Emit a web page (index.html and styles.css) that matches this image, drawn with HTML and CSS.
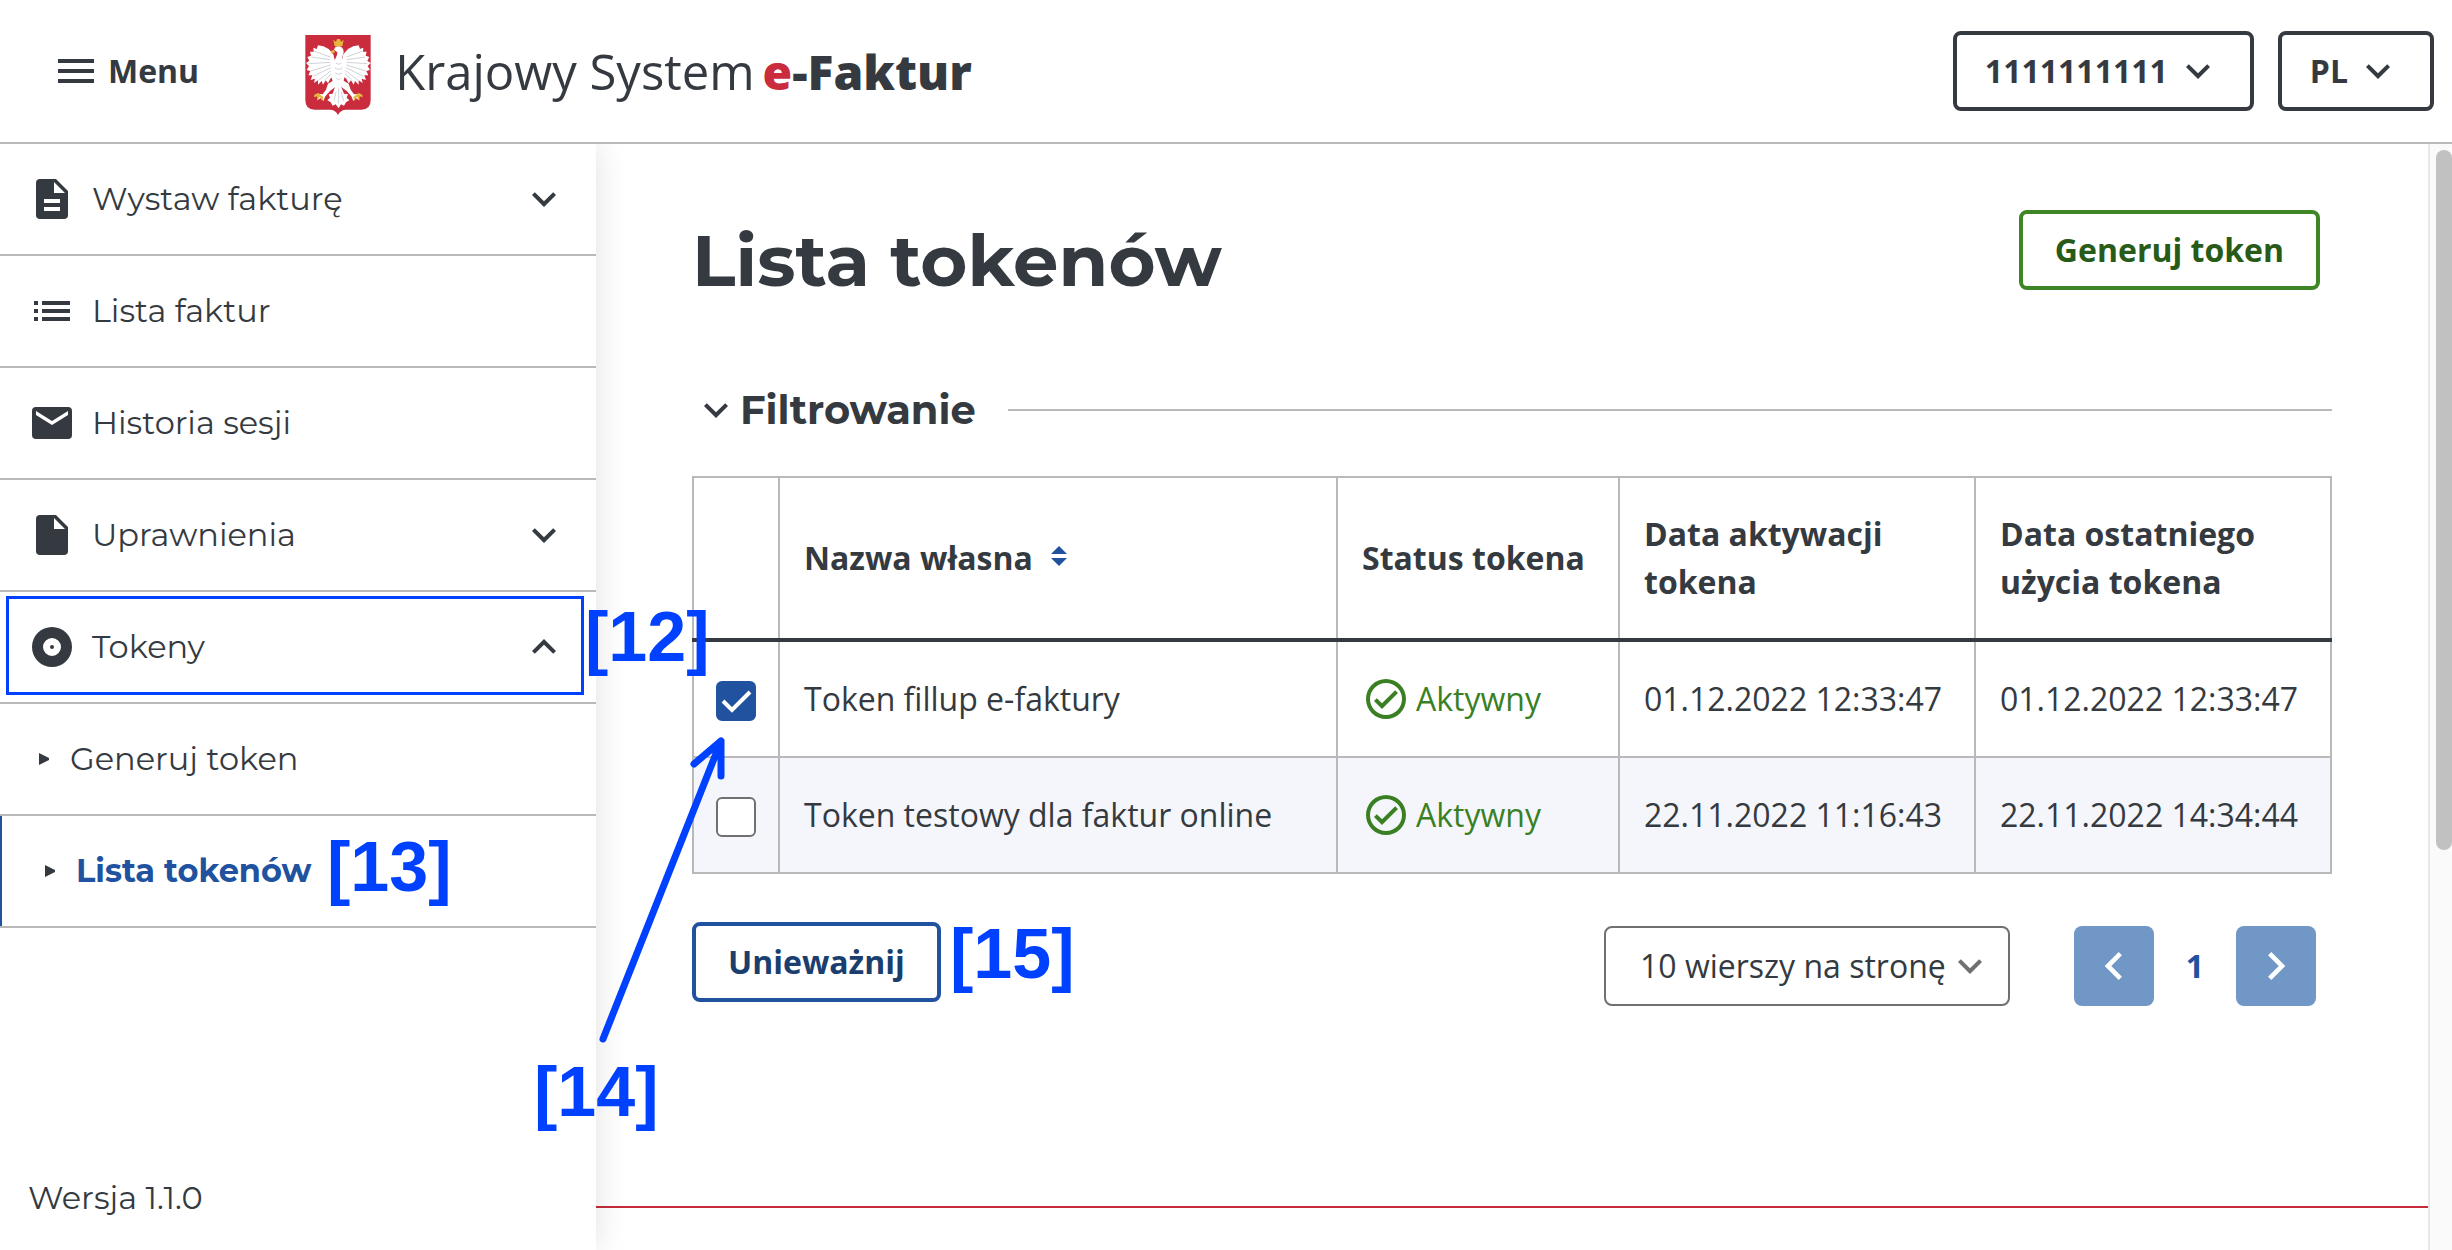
FILE: index.html
```html
<!DOCTYPE html>
<html lang="pl">

<head>
  <meta charset="utf-8">
  <title>Krajowy System e-Faktur - Lista tokenów</title>
  <link rel="stylesheet" href="styles.css">
</head>

<body>
  <!-- Icons -->
  <svg class="sprite" aria-hidden="true">
    <symbol id="i-down" viewBox="0 0 24 24"><path d="M7.41 8.59 12 13.17l4.59-4.58L18 10l-6 6-6-6z"/></symbol>
    <symbol id="i-up" viewBox="0 0 24 24"><path d="M7.41 15.41 12 10.83l4.59 4.58L18 14l-6-6-6 6z"/></symbol>
    <symbol id="i-left" viewBox="0 0 24 24"><path d="M15.41 7.41 14 6l-6 6 6 6 1.41-1.41L10.83 12z"/></symbol>
    <symbol id="i-right" viewBox="0 0 24 24"><path d="M10 6 8.59 7.41 13.17 12l-4.58 4.59L10 18l6-6z"/></symbol>
    <symbol id="i-check" viewBox="0 0 24 24"><path d="M16.59 7.58 10 14.17l-2.59-2.58L6 13l4 4 8-8zM12 2a10 10 0 1 0 0 20 10 10 0 0 0 0-20zm0 18a8 8 0 1 1 0-16 8 8 0 0 1 0 16z"/></symbol>
    <symbol id="i-play" viewBox="0 0 12 12"><path d="M1 0l10 5v2L1 12z"/></symbol>
  </svg>

  <header class="top-bar">
    <button class="menu-button">
      <svg class="icon" viewBox="0 0 24 24"><path d="M3 18h18v-2H3zm0-5h18v-2H3zm0-7v2h18V6z"/></svg>
      Menu
    </button>
    <a class="brand" href="#">
      <svg class="emblem" viewBox="0 0 196 240" role="img" aria-label="Godło Polski">
        <path fill="#cb2c3d" d="M0 0h196v196q0 28-28 28h-48q-16 2-22 16-6-14-22-16H28Q0 224 0 196z"/>
        <g id="wing" fill="#fff">
          <path d="M90 84 84 58 70 42 54 34 38 31 34 42 24 38 25 50 14 50 17 62 6 66 12 77 2 84 11 93 4 105 15 108 9 121 21 121 16 135 29 131 26 144 38 136 38 149 49 138 53 149 61 136 68 145 76 130 90 122z"/>
          <path d="M92 132 68 146 62 164 52 178 38 176 28 182 40 184 36 196 48 188 54 198 60 184 74 168 90 156z"/>
          <g fill="none" stroke="#cfd2d8" stroke-width="3">
            <path d="M74 66 26 48M74 74 18 66M74 82 12 86M75 90 16 108M76 98 24 124M78 106 40 136M82 112 60 134"/>
          </g>
          <path fill="#e5b73b" d="M38 174l-11 5-1 8 9-3 1 13 7-12 8 13 3-12z"/>
        </g>
        <use href="#wing" transform="matrix(-1 0 0 1 198 0)"/>
        <path fill="#fff" d="M86 44q4-12 16-10 13 3 13 18l-5 18q10 14 10 36-2 30-12 50l8 20 12 2-4 10 8 8-10 6-6 10-9-4-7 12-9-12-9 4-6-10-10-6 8-8-4-10 12-2 7-20q-12-22-12-50 0-20 14-36 5-8 5-18z"/>
        <path fill="none" stroke="#cfd2d8" stroke-width="3" d="M92 84q8 8 16 0M88 98q12 10 24 0M90 114q10 8 20 0M92 130q8 8 14 0M100 160v46M92 170l-6 28M107 170l8 28"/>
        <path fill="#e5b73b" d="M86 44l-10 4 3 9 10-5zM84 14l8 7 3-9h9l3 9 8-7-4 20H88z"/>
      </svg>
      <span class="brand-name">Krajowy System <strong><em>e</em>-Faktur</strong></span>
    </a>
    <div class="top-actions">
      <button class="btn">1111111111 <svg class="icon"><use href="#i-down"/></svg></button>
      <button class="btn">PL <svg class="icon"><use href="#i-down"/></svg></button>
    </div>
  </header>

  <div class="layout">
    <aside class="sidebar">
      <nav>
        <ul class="nav-list">
          <li>
            <button class="nav-item">
              <svg class="icon" viewBox="0 0 24 24"><path fill-rule="evenodd" d="M6 2a2 2 0 0 0-2 2v16q0 2 2 2h12q2 0 2-2V8l-6-6zM13 3.500V9h5.500zM8 12h8v2H8zM8 16h8v2H8z"/></svg>
              <span>Wystaw fakturę</span>
              <svg class="icon arrow"><use href="#i-down"/></svg>
            </button>
          </li>
          <li>
            <a class="nav-item" href="#">
              <svg class="icon" viewBox="0 0 24 24"><path d="M3 7h2v2H3zM3 11h2v2H3zM3 15h2v2H3zM7 7h14v2H7zM7 11h14v2H7zM7 15h14v2H7z"/></svg>
              <span>Lista faktur</span>
            </a>
          </li>
          <li>
            <a class="nav-item" href="#">
              <svg class="icon" viewBox="0 0 24 24"><path d="M20 4H4a2 2 0 0 0-2 2v12q0 2 2 2h16q2 0 2-2V6a2 2 0 0 0-2-2zm0 4-8 5-8-5V6l8 5 8-5z"/></svg>
              <span>Historia sesji</span>
            </a>
          </li>
          <li>
            <button class="nav-item">
              <svg class="icon" viewBox="0 0 24 24"><path fill-rule="evenodd" d="M6 2a2 2 0 0 0-2 2v16q0 2 2 2h12q2 0 2-2V8l-6-6zM13 3.500V9h5.500z"/></svg>
              <span>Uprawnienia</span>
              <svg class="icon arrow"><use href="#i-down"/></svg>
            </button>
          </li>
          <li>
            <button class="nav-item">
              <svg class="icon" viewBox="0 0 24 24"><path fill-rule="evenodd" d="M12 2a10 10 0 1 0 0 20 10 10 0 0 0 0-20zm0 5.500a4.500 4.500 0 1 1 0 9 4.500 4.500 0 0 1 0-9z"/><circle cx="12" cy="12" r="1"/></svg>
              <span>Tokeny</span>
              <svg class="icon arrow"><use href="#i-up"/></svg>
            </button>
          </li>
          <li>
            <a class="nav-item sub" href="#"><svg class="bullet"><use href="#i-play"/></svg>Generuj token</a>
          </li>
          <li>
            <a class="nav-item sub active" href="#"><svg class="bullet"><use href="#i-play"/></svg>Lista tokenów</a>
          </li>
        </ul>
      </nav>
      <p class="version">Wersja 1.1.0</p>
    </aside>

    <main class="content">
      <div class="page">
        <div class="page-head">
          <h1>Lista tokenów</h1>
          <button class="btn btn-green">Generuj token</button>
        </div>

        <div class="filter">
          <button class="filter-toggle"><svg class="icon"><use href="#i-down"/></svg>Filtrowanie</button>
          <hr>
        </div>

        <table class="tokens">
          <colgroup>
            <col class="col-check">
            <col>
            <col class="col-status">
            <col class="col-date">
            <col class="col-date">
          </colgroup>
          <thead>
            <tr>
              <th></th>
              <th>Nazwa własna <svg class="sort" viewBox="0 0 16 20"><path d="M8 0l8 8H0zM0 12h16l-8 8z"/></svg></th>
              <th>Status tokena</th>
              <th>Data aktywacji tokena</th>
              <th>Data ostatniego użycia tokena</th>
            </tr>
          </thead>
          <tbody>
            <tr>
              <td class="cell-check"><input type="checkbox" id="token-1" checked></td>
              <td><label for="token-1">Token fillup e-faktury</label></td>
              <td><span class="status"><svg class="icon"><use href="#i-check"/></svg>Aktywny</span></td>
              <td>01.12.2022 12:33:47</td>
              <td>01.12.2022 12:33:47</td>
            </tr>
            <tr>
              <td class="cell-check"><input type="checkbox" id="token-2"></td>
              <td><label for="token-2">Token testowy dla faktur online</label></td>
              <td><span class="status"><svg class="icon"><use href="#i-check"/></svg>Aktywny</span></td>
              <td>22.11.2022 11:16:43</td>
              <td>22.11.2022 14:34:44</td>
            </tr>
          </tbody>
        </table>

        <div class="table-foot">
          <button class="btn btn-blue">Unieważnij</button>
          <div class="paging">
            <select class="page-size" aria-label="Liczba wierszy na stronę">
              <option>10 wierszy na stronę</option>
            </select>
            <div class="pager">
              <button class="page-nav" aria-label="Poprzednia strona"><svg><use href="#i-left"/></svg></button>
              <span class="page-number">1</span>
              <button class="page-nav" aria-label="Następna strona"><svg><use href="#i-right"/></svg></button>
            </div>
          </div>
        </div>
      </div>
      <div class="page-end"></div>
    </main>

    <div class="scrollbar"><div class="thumb"></div></div>
  </div>

  <!-- Manual callouts -->
  <div class="callouts">
    <div class="frame"></div>
    <span class="mark mark-12">[12]</span>
    <span class="mark mark-13">[13]</span>
    <span class="mark mark-14">[14]</span>
    <span class="mark mark-15">[15]</span>
    <svg class="pointer" viewBox="0 0 140 310"><path d="M13 309 131 11M104 34 131 11V46"/></svg>
  </div>
</body>

</html>
```

FILE: styles.css
```css
* {
  box-sizing: border-box;
}

body {
  margin: 0;
  height: 100vh;
  overflow: hidden;
  position: relative;
  display: flex;
  flex-direction: column;
  font-family: "Open Sans", sans-serif;
  font-size: 32px;
  line-height: 48px;
  color: #343a40;
  background: #fff;
}

button,
select {
  font: inherit;
  color: inherit;
  cursor: pointer;
}

a {
  color: inherit;
  text-decoration: none;
}

.sprite {
  display: none;
}

.icon {
  width: 48px;
  height: 48px;
  flex: none;
  fill: currentColor;
}

/* Header */
.top-bar {
  flex: none;
  height: 144px;
  padding: 0 18px 0 52px;
  display: flex;
  align-items: center;
  border-bottom: 2px solid #b9b9b9;
  background: #fff;
  z-index: 2;
}

.menu-button {
  display: flex;
  align-items: center;
  gap: 8px;
  padding: 0;
  border: none;
  background: none;
  font-weight: 700;
}

.brand {
  display: flex;
  align-items: center;
  gap: 24px;
  margin-left: 106px;
}

.emblem {
  width: 66px;
  height: 80px;
  margin-top: 8px;
}

.brand-name {
  display: flex;
  align-items: baseline;
  gap: 8px;
  font-size: 49px;
  font-weight: 500;
  line-height: 72px;
}

.brand-name strong {
  font-size: 48px;
  font-weight: 800;
}

.brand-name em {
  font-style: normal;
  color: #cb2c3d;
}

.top-actions {
  display: flex;
  gap: 24px;
  margin-left: auto;
}

.btn {
  display: flex;
  align-items: center;
  gap: 6px;
  height: 80px;
  padding: 0 28px;
  border: 4px solid #343a40;
  border-radius: 8px;
  background: #fff;
  font-weight: 700;
}

.btn-green {
  padding: 0 32px;
  border-color: #3d8525;
  color: #275b17;
}

.btn-blue {
  padding: 0 32px;
  border-color: #2052a0;
  color: #1a3e6e;
}

/* Sidebar */
.layout {
  flex: 1;
  min-height: 0;
  display: flex;
}

.sidebar {
  flex: none;
  width: 596px;
  display: flex;
  flex-direction: column;
  font-family: Montserrat, Inter, sans-serif;
  background: #fff;
  box-shadow: 0 0 32px rgba(0, 0, 0, 0.12);
  z-index: 1;
}

.nav-list {
  margin: 0;
  padding: 0;
  list-style: none;
}

.nav-list li {
  border-bottom: 2px solid #b9b9b9;
}

.nav-item {
  display: flex;
  align-items: center;
  gap: 16px;
  width: 100%;
  height: 110px;
  padding: 0 28px;
  border: none;
  background: none;
  text-align: left;
}

.nav-item .arrow {
  margin-left: auto;
}

.nav-item.sub {
  gap: 20px;
  padding-left: 38px;
}

.nav-item.sub.active {
  padding-left: 42px;
  border-left: 2px solid #2052a0;
  font-weight: 700;
  color: #2052a0;
}

.bullet {
  width: 12px;
  height: 12px;
  fill: #343a40;
}

.version {
  margin: auto 0 28px;
  padding: 0 28px;
}

/* Content */
.content {
  flex: 1;
  min-width: 0;
}

.page {
  padding: 66px 96px 0;
}

.page-head {
  display: flex;
  justify-content: space-between;
  align-items: flex-start;
  padding-right: 12px;
}

h1 {
  margin: 0;
  font-family: Montserrat, Inter, sans-serif;
  font-size: 72px;
  line-height: 100px;
}

.filter {
  display: flex;
  align-items: center;
  gap: 32px;
  margin: 76px 0 42px;
}

.filter-toggle {
  display: flex;
  align-items: center;
  padding: 0;
  border: none;
  background: none;
  font-family: Montserrat, Inter, sans-serif;
  font-size: 40px;
  font-weight: 700;
}

.filter hr {
  flex: 1;
  margin: 0;
  border: none;
  border-top: 2px solid #b9b9b9;
}

.tokens {
  width: 100%;
  table-layout: fixed;
  border-collapse: collapse;
}

.col-check {
  width: 86px;
}

.col-status {
  width: 282px;
}

.col-date {
  width: 356px;
}

.tokens th,
.tokens td {
  padding: 33px 24px;
  border: 2px solid #b9b9b9;
  text-align: left;
}

.tokens th {
  padding: 32px 24px;
  border-bottom: 4px solid #343a40;
}

.tokens tbody tr:nth-child(even) {
  background: #f5f6fb;
}

.tokens .cell-check {
  padding: 4px 22px 0;
}

.tokens input {
  appearance: none;
  display: block;
  width: 40px;
  height: 40px;
  margin: 0;
  border: 2px solid #707070;
  border-radius: 6px;
  background: #fff;
}

.tokens input:checked {
  border-color: #2052a0;
  background: #2052a0 url("data:image/svg+xml,%3Csvg xmlns='http://www.w3.org/2000/svg' viewBox='0 0 36 36'%3E%3Cpath d='M5 18l9 9L32 9' fill='none' stroke='white' stroke-width='4'/%3E%3C/svg%3E") center / 36px no-repeat;
}

.sort {
  width: 16px;
  height: 20px;
  margin-left: 10px;
  vertical-align: 4px;
  fill: #2052a0;
}

.status {
  display: flex;
  align-items: center;
  gap: 6px;
  color: #3a8023;
}

.table-foot {
  display: flex;
  justify-content: space-between;
  align-items: flex-start;
  padding: 48px 16px 0 0;
}

.paging {
  display: flex;
  gap: 64px;
  padding-top: 4px;
}

.page-size {
  appearance: none;
  height: 80px;
  padding: 0 62px 0 34px;
  border: 2px solid #707070;
  border-radius: 8px;
  background: #fff url("data:image/svg+xml,%3Csvg xmlns='http://www.w3.org/2000/svg' viewBox='0 0 24 24'%3E%3Cpath d='M7.410 8.590 12 13.170l4.590-4.580L18 10l-6 6-6-6z' fill='%23707070'/%3E%3C/svg%3E") right 14px center / 48px no-repeat;
}

.pager {
  display: flex;
  align-items: center;
}

.page-nav {
  display: grid;
  place-items: center;
  width: 80px;
  height: 80px;
  padding: 0;
  border: none;
  border-radius: 8px;
  background: #7197c6;
  color: #fff;
}

.page-nav svg {
  width: 56px;
  height: 56px;
  fill: currentColor;
}

.page-number {
  width: 82px;
  text-align: center;
  font-weight: 700;
  color: #2052a0;
}

.page-end {
  margin-top: 200px;
  border-top: 2px solid #c52b3a;
}

.scrollbar {
  flex: none;
  width: 24px;
  padding: 6px 0 0 6px;
  border-left: 2px solid #e8e8e8;
  background: #fafafa;
}

.thumb {
  height: 700px;
  border-radius: 8px;
  background: #c1c1c1;
}

/* Callouts drawn over the page */
.callouts {
  position: absolute;
  inset: 0;
  z-index: 3;
  pointer-events: none;
}

.frame {
  position: absolute;
  left: 6px;
  top: 596px;
  width: 578px;
  height: 99px;
  border: 3px solid #0041ff;
}

.mark {
  position: absolute;
  font-family: "Liberation Sans", Arial, sans-serif;
  font-size: 70px;
  line-height: 80px;
  font-weight: 700;
  color: #0041ff;
}

.mark-12 {
  left: 585px;
  top: 597px;
}

.mark-13 {
  left: 327px;
  top: 827px;
}

.mark-14 {
  left: 534px;
  top: 1052px;
}

.mark-15 {
  left: 950px;
  top: 914px;
}

.pointer {
  position: absolute;
  left: 590px;
  top: 730px;
  width: 140px;
  height: 310px;
  overflow: visible;
  fill: none;
  stroke: #0041ff;
  stroke-width: 7px;
  stroke-linecap: round;
  stroke-linejoin: round;
}
```
